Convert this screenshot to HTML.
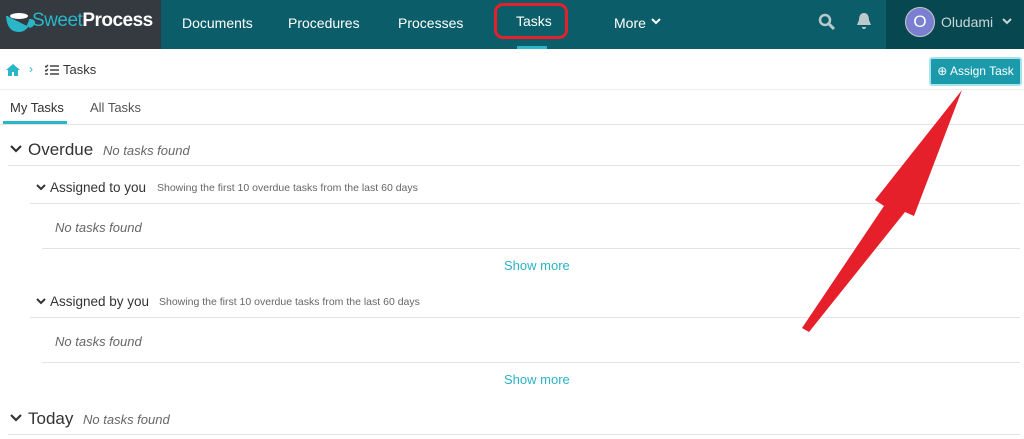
<!DOCTYPE html><html><head><style>
body{margin:0;width:1024px;height:439px;overflow:hidden;background:#fff;font-family:"Liberation Sans",sans-serif;position:relative}
.a{position:absolute;white-space:nowrap}
.nav{position:absolute;left:0;top:0;width:1024px;height:49px;background:#0b5e69}
.line{position:absolute;height:1px;background:#e3e3e3}
.h1{font-size:17px;color:#333}
.nf{font-style:italic;color:#666;font-size:13px}
.h2{font-size:13.5px;color:#333}
.sm{font-size:10.5px;color:#666}
.sh{color:#2bb3c6;font-size:13px}
.cv{position:absolute}
</style></head><body>
<div class="nav"></div>
<div class="a" style="left:0;top:0;width:161px;height:49px;background:#343a40"></div>
<div class="a" style="left:886px;top:0;width:138px;height:49px;background:#074850"></div>
<svg class="a" style="left:6px;top:10px" width="30" height="24"><path d="M1 6 Q2 21 13 21 Q21 21 24 10 Q28 10 28 13 Q27 16 23 17" fill="#29b6c8" stroke="#29b6c8" stroke-width="2"/><ellipse cx="13" cy="6" rx="9" ry="3" fill="#fff"/></svg>
<div class="a" style="left:32px;top:10px;font-size:19px;color:#29b6c8;letter-spacing:-0.5px">Sweet<b style="color:#fff">Process</b></div>
<div class="a" style="left:182px;color:#fff;font-size:14px;top:15px">Documents</div>
<div class="a" style="left:288px;color:#fff;font-size:14px;top:15px">Procedures</div>
<div class="a" style="left:398px;color:#fff;font-size:14px;top:15px">Processes</div>
<div class="a" style="left:494px;top:3px;width:74px;height:36px;border:3px solid #e5202a;border-radius:9px;box-sizing:border-box"></div>
<div class="a" style="left:516px;color:#fff;font-size:14px;top:13px">Tasks</div>
<div class="a" style="left:517px;top:46px;width:30px;height:3px;background:#29b6c8"></div>
<div class="a" style="left:614px;color:#fff;font-size:14px;top:15px">More</div>
<svg class="a" style="left:651px;top:18px" width="10" height="8"><path d="M1 1l4 4 4-4" fill="none" stroke="#fff" stroke-width="2"/></svg>
<svg class="a" style="left:818px;top:13px" width="18" height="18"><circle cx="7" cy="7" r="5" fill="none" stroke="#b9c9cc" stroke-width="2.5"/><path d="M11 11l5 5" stroke="#b9c9cc" stroke-width="3"/></svg>
<svg class="a" style="left:856px;top:12px" width="16" height="18"><path d="M8 1C4 1 3 5 3 8L1 13H15L13 8C13 5 12 1 8 1ZM6 15h4a2 2 0 0 1-4 0" fill="#b9c9cc"/></svg>
<div class="a" style="left:905px;top:7px;width:28px;height:28px;border-radius:50%;background:#7a7fcf;border:1px solid #ccc;color:#fff;font-size:17px;text-align:center;line-height:28px">O</div>
<div class="a" style="left:941px;top:14px;color:#c9d6d8;font-size:14px">Oludami</div>
<svg class="a" style="left:1002px;top:18px" width="10" height="8"><path d="M1 1l4 4 4-4" fill="none" stroke="#c9d6d8" stroke-width="2"/></svg>
<svg class="a" style="left:5px;top:63px" width="16" height="14"><path d="M8 1L1 7h2v6h4V9h2v4h4V7h2Z" fill="#29b6c8"/></svg>
<div class="a" style="left:29px;top:62px;color:#29b6c8;font-size:12px">›</div>
<svg class="a" style="left:45px;top:64px" width="14" height="12"><path d="M5 2h9M5 6h9M5 10h9M0 2l1 1 2-2M0 6l1 1 2-2M0 10h3" stroke="#444" stroke-width="1.5" fill="none"/></svg>
<div class="a" style="left:63px;top:62px;font-size:13px;color:#333">Tasks</div>
<div class="a" style="left:929px;top:57px;width:89px;height:25px;background:#1a9aaa;border:2px solid #a6e3ea;border-radius:3px;color:#fff;font-size:12px;line-height:25px;text-align:center">⊕ Assign Task</div>
<div class="line" style="left:0;top:89px;width:1024px;background:#eee"></div>
<div class="a" style="left:10px;top:100px;font-size:13px;color:#333">My Tasks</div>
<div class="a" style="left:90px;top:100px;font-size:13px;color:#555">All Tasks</div>
<div class="a" style="left:3px;top:121px;width:64px;height:3px;background:#29b6c8"></div>
<div class="line" style="left:0;top:124px;width:1024px"></div>
<svg class="cv" style="left:10px;top:145px" width="12" height="9"><path d="M1 1l5 5 5-5" fill="none" stroke="#333" stroke-width="2.2"/></svg>
<div class="a h1" style="left:28px;top:140px">Overdue</div><div class="a nf" style="left:103px;top:143px">No tasks found</div>
<div class="line" style="left:8px;top:165px;width:1012px"></div>
<svg class="cv" style="left:36px;top:184px" width="10" height="8"><path d="M1 1l4 4 4-4" fill="none" stroke="#333" stroke-width="2"/></svg>
<div class="a h2" style="left:50px;top:180px">Assigned to you</div><div class="a sm" style="left:157px;top:182px">Showing the first 10 overdue tasks from the last 60 days</div>
<div class="line" style="left:30px;top:203px;width:990px"></div>
<div class="a nf" style="left:55px;top:220px">No tasks found</div>
<div class="line" style="left:42px;top:248px;width:978px"></div>
<div class="a sh" style="left:504px;top:258px">Show more</div>
<svg class="cv" style="left:36px;top:298px" width="10" height="8"><path d="M1 1l4 4 4-4" fill="none" stroke="#333" stroke-width="2"/></svg>
<div class="a h2" style="left:50px;top:294px">Assigned by you</div><div class="a sm" style="left:159px;top:296px">Showing the first 10 overdue tasks from the last 60 days</div>
<div class="line" style="left:30px;top:317px;width:990px"></div>
<div class="a nf" style="left:55px;top:334px">No tasks found</div>
<div class="line" style="left:42px;top:362px;width:978px"></div>
<div class="a sh" style="left:504px;top:372px">Show more</div>
<svg class="cv" style="left:10px;top:414px" width="12" height="9"><path d="M1 1l5 5 5-5" fill="none" stroke="#333" stroke-width="2.2"/></svg>
<div class="a h1" style="left:28px;top:409px">Today</div><div class="a nf" style="left:83px;top:412px">No tasks found</div>
<div class="line" style="left:8px;top:434px;width:1012px"></div>
<svg class="a" style="left:0;top:0" width="1024" height="439"><path d="M802 328 L884 206 L875 200 L962 90 L914 216 L905 212 L809 332Z" fill="#e5202a"/></svg>
</body></html>
